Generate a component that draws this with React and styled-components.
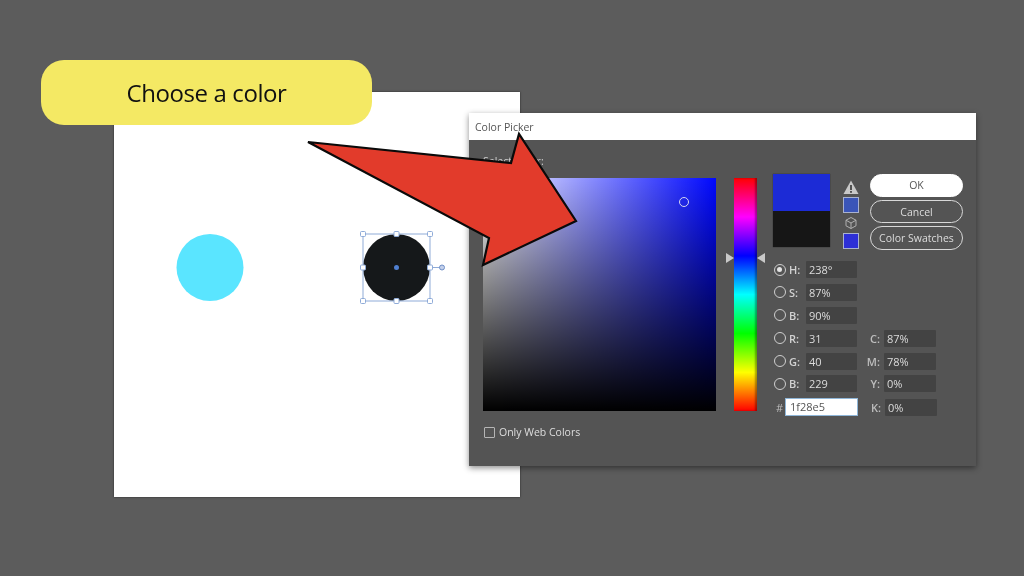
import React from 'react';
import styled, {createGlobalStyle} from 'styled-components';

const Global=createGlobalStyle`
html,body{
    margin: 0;
    padding: 0;
    background-color: #5c5c5c;
}
`;

const Stage=styled.div`
position: relative;
width: 1024px;
height: 576px;
overflow: hidden;
background-color: #5c5c5c;
font-family: "Open Sans", "Liberation Sans", sans-serif;
filter: blur(0.35px);
`;

// the white page behind everything
const Artboard=styled.svg`
position: absolute;
left: 114px;
top: 92px;
width: 406px;
height: 405px;
background-color: white;
box-shadow: 0px 0px 2px rgba(0,0,0,0.6);
`;

const Callout=styled.div`
position: absolute;
left: 41px;
top: 60px;
width: 331px;
height: 65px;
display: flex;
align-items: center;
justify-content: center;
background-color: #f4e964;
border-radius: 23px;
color: #111;
font-size: 24px;
letter-spacing: -0.4px;
`;

const Dialog=styled.div`
position: absolute;
left: 469px;
top: 113px;
width: 507px;
height: 353px;
background-color: #545454;
box-shadow: 0px 2px 6px rgba(0,0,0,0.45);
display: flex;
flex-direction: column;
`;

const TitleBar=styled.div`
height: 27px;
flex-shrink: 0;
display: flex;
align-items: center;
padding-left: 6px;
background-color: white;
color: #555;
font-size: 10.5px;
`;

const Body=styled.div`
padding: 14px 0px 0px 14px;
display: flex;
flex-direction: column;
`;

const Heading=styled.div`
height: 20px;
color: #cfcfcf;
font-size: 10.5px;
line-height: 14px;
`;

const PickerRow=styled.div`
display: flex;
flex-direction: row;
align-items: flex-start;
`;

const ColorField=styled.div`
position: relative;
width: 233px;
height: 233px;
flex-shrink: 0;
margin-top: 4px;
background:
    linear-gradient(to top, #000, rgba(0,0,0,0)),
    linear-gradient(to right, #fff, #0008ff);
`;

const Marker=styled.span`
position: absolute;
left: 196px;
top: 19px;
width: 8px;
height: 8px;
border: 1.5px solid #d4d6ee;
border-radius: 50%;
`;

const HueStrip=styled.div`
position: relative;
width: 23px;
height: 233px;
flex-shrink: 0;
margin: 4px 16px 0px 18px;
background: linear-gradient(to bottom, #ff0000, #ff00ff 16.7%, #0000ff 33.4%, #00ffff 50%, #00ff00 66.7%, #ffff00 83.4%, #ff0000);
box-shadow: inset -2px 0px 2px rgba(0,0,0,0.35);
`;

const HueArrow=styled.span`
position: absolute;
top: 75px;
${props=>props.$side==='left'?'left: -8px;':'right: -8px;'}
width: 0px;
height: 0px;
border-top: 5px solid transparent;
border-bottom: 5px solid transparent;
${props=>props.$side==='left'?'border-left: 8px solid #c9c9c9;':'border-right: 8px solid #c9c9c9;'}
`;

const RightColumn=styled.div`
width: 190px;
flex-shrink: 0;
display: flex;
flex-direction: column;
gap: 11px;
`;

const TopRow=styled.div`
display: flex;
flex-direction: row;
height: 76px;
`;

const Preview=styled.div`
width: 57px;
height: 73px;
display: flex;
flex-direction: column;
box-shadow: 0px 0px 1px #222;
`;

const PreviewPart=styled.div`
height: ${props=>props.$h}px;
background-color: ${props=>props.$color};
`;

const IconColumn=styled.div`
width: 16px;
margin: 6px 11px 0px 13px;
display: flex;
flex-direction: column;
align-items: center;
`;

const WarningIcon=styled.svg`
width: 16px;
height: 15px;
margin-bottom: 2px;
`;

const Swatch=styled.div`
width: 16px;
height: 16px;
box-sizing: border-box;
border: 1px solid #a9b2cf;
background-color: ${props=>props.$color};
`;

const ButtonColumn=styled.div`
width: 93px;
display: flex;
flex-direction: column;
gap: 3px;
`;

const PillButton=styled.button`
height: ${props=>props.$primary?'23px':'24px'};
padding: 0px;
box-sizing: border-box;
border-radius: 12px;
border: 1.5px solid ${props=>props.$primary?'white':'#d8d8d8'};
background-color: ${props=>props.$primary?'white':'transparent'};
color: ${props=>props.$primary?'#555':'#dcdcdc'};
font-family: inherit;
font-size: 10.5px;
`;

const Fields=styled.div`
display: flex;
flex-direction: column;
gap: 5.9px;
`;

const FieldRow=styled.div`
display: grid;
grid-template-columns: ${props=>props.$hash?'12px 73px':'33px 51px'} 27px 52px;
height: ${props=>props.$hash?'18px':'17px'};
align-items: center;
`;

const LabelCell=styled.div`
display: flex;
flex-direction: row;
align-items: center;
gap: 3px;
padding-left: 1px;
color: #d2d2d2;
font-size: 11px;
font-weight: 600;
`;

const HashLabel=styled(LabelCell)`
padding-left: 3px;
font-weight: 400;
color: #bdbdbd;
`;

const Radio=styled.span`
position: relative;
width: 12px;
height: 12px;
flex-shrink: 0;
box-sizing: border-box;
border: 1.5px solid #cfcfcf;
border-radius: 50%;
${props=>props.$on?`
    &::after{
        content: "";
        position: absolute;
        left: 2px;
        top: 2px;
        width: 5px;
        height: 5px;
        border-radius: 50%;
        background-color: #e4e4e4;
    }
`:''}
`;

const ValueBox=styled.div`
height: 17px;
box-sizing: border-box;
padding-left: 3px;
background-color: #434343;
border-radius: 1px;
color: #dcdcdc;
font-size: 11px;
line-height: 17px;
`;

const HexBox=styled.div`
height: 18px;
box-sizing: border-box;
padding-left: 4px;
background-color: white;
border: 1px solid #8fb6d8;
color: #555;
font-size: 11px;
line-height: 16px;
`;

const SideLabel=styled.div`
text-align: right;
padding-right: 4px;
color: #bdbdbd;
font-size: 11px;
font-weight: 600;
`;

const Footer=styled.label`
display: flex;
flex-direction: row;
align-items: center;
gap: 4px;
margin: 9px 0px 0px 1px;
color: #dedede;
font-size: 10.5px;
font-weight: 500;
`;

const CheckBox=styled.span`
width: 11px;
height: 11px;
box-sizing: border-box;
border: 1px solid #b5b5b5;
border-radius: 1px;
`;

const ArrowSvg=styled.svg`
position: absolute;
left: 0px;
top: 0px;
width: 1024px;
height: 576px;
pointer-events: none;
`;

const rows=[
    {label:'H:',value:'238°',on:true},
    {label:'S:',value:'87%'},
    {label:'B:',value:'90%'},
    {label:'R:',value:'31',side:'C:',sideValue:'87%'},
    {label:'G:',value:'40',side:'M:',sideValue:'78%'},
    {label:'B:',value:'229',side:'Y:',sideValue:'0%'},
];

// selection handles of the black circle, in artboard coords
const handles=[[249,142],[282.5,142],[316,142],[249,175.5],[316,175.5],[249,209],[282.5,209],[316,209]];

const App=()=>{
    return(
        <Stage>
            <Global/>
            <Artboard viewBox="0 0 406 405">
                <circle cx="96" cy="175.5" r="33.5" fill="#5ae5ff"/>
                <circle cx="282.5" cy="175.5" r="33.5" fill="#15181a"/>
                <rect x="249" y="142" width="67" height="67" fill="none" stroke="#8fabd8" strokeWidth="1"/>
                <line x1="316" y1="175.5" x2="328" y2="175.5" stroke="#8fabd8" strokeWidth="1"/>
                <circle cx="328" cy="175.5" r="2.5" fill="#c4d0ea" stroke="#6f8fc8" strokeWidth="1"/>
                <circle cx="282.5" cy="175.5" r="2.5" fill="#4f7fd0"/>
                {handles.map(([x,y])=>(
                    <rect key={x+'-'+y} x={x-2.5} y={y-2.5} width="5" height="5" rx="1" fill="white" stroke="#8fabd8" strokeWidth="1"/>
                ))}
            </Artboard>

            <Dialog>
                <TitleBar>Color Picker</TitleBar>
                <Body>
                    <Heading>Select Color:</Heading>
                    <PickerRow>
                        <ColorField><Marker/></ColorField>
                        <HueStrip>
                            <HueArrow $side="left"/>
                            <HueArrow $side="right"/>
                        </HueStrip>
                        <RightColumn>
                            <TopRow>
                                <Preview>
                                    <PreviewPart $h={37} $color="#1c2bd6"/>
                                    <PreviewPart $h={36} $color="#161616"/>
                                </Preview>
                                <IconColumn>
                                    <WarningIcon viewBox="0 0 16 15">
                                        <path d="M8 0.5 L15.5 14 L0.5 14 Z" fill="#c8c8c8"/>
                                        <rect x="7.1" y="5" width="1.8" height="5" fill="#444"/>
                                        <rect x="7.1" y="11" width="1.8" height="1.8" fill="#444"/>
                                    </WarningIcon>
                                    <Swatch $color="#3a55b8"/>
                                    <svg width="12" height="20" viewBox="0 0 12 20">
                                        <path d="M6 4.5 L11 7.2 L11 12.8 L6 15.5 L1 12.8 L1 7.2 Z M1 7.2 L6 10 L11 7.2 M6 10 L6 15.5" fill="none" stroke="#b0b0b0" strokeWidth="1"/>
                                    </svg>
                                    <Swatch $color="#2d2fd6"/>
                                </IconColumn>
                                <ButtonColumn>
                                    <PillButton $primary>OK</PillButton>
                                    <PillButton>Cancel</PillButton>
                                    <PillButton>Color Swatches</PillButton>
                                </ButtonColumn>
                            </TopRow>
                            <Fields>
                                {rows.map((row,i)=>(
                                    <FieldRow key={i}>
                                        <LabelCell><Radio $on={row.on}/>{row.label}</LabelCell>
                                        <ValueBox>{row.value}</ValueBox>
                                        {row.side?<SideLabel>{row.side}</SideLabel>:null}
                                        {row.side?<ValueBox>{row.sideValue}</ValueBox>:null}
                                    </FieldRow>
                                ))}
                                <FieldRow $hash>
                                    <HashLabel>#</HashLabel>
                                    <HexBox>1f28e5</HexBox>
                                    <SideLabel>K:</SideLabel>
                                    <ValueBox>0%</ValueBox>
                                </FieldRow>
                            </Fields>
                        </RightColumn>
                    </PickerRow>
                    <Footer><CheckBox/>Only Web Colors</Footer>
                </Body>
            </Dialog>

            <Callout>Choose a color</Callout>

            <ArrowSvg viewBox="0 0 1024 576">
                <path d="M308 142 L511 163 L519 134 L576 221 L483 265 L489 238 Z" fill="#e23b2b" stroke="#0a0a0a" strokeWidth="2.2" strokeLinejoin="miter"/>
            </ArrowSvg>
        </Stage>
    )
}

export default App;
